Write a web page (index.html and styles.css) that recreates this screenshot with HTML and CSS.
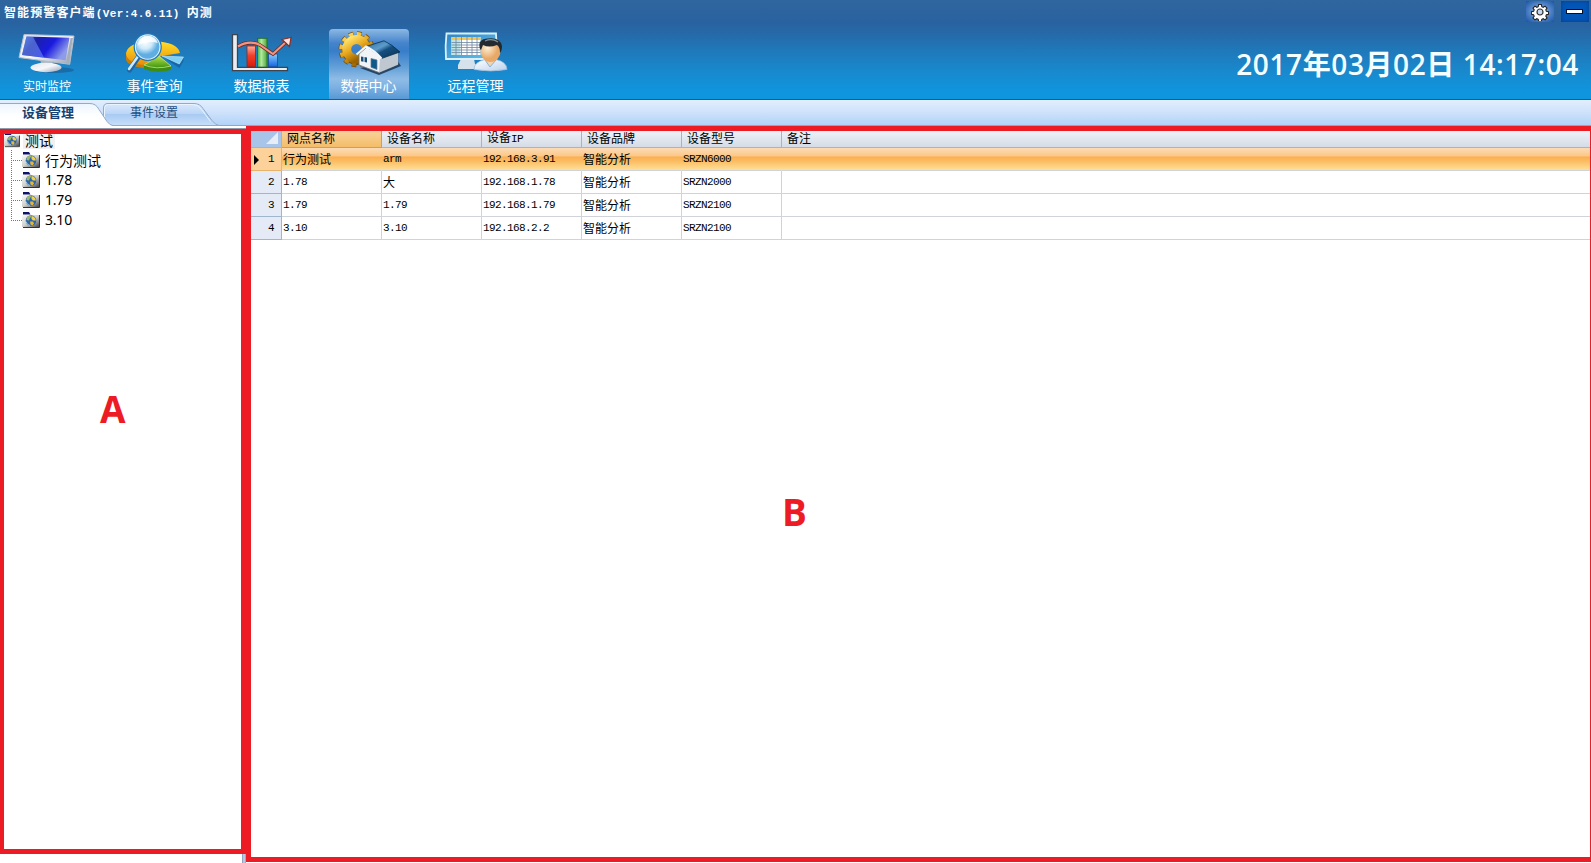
FILE: index.html
```html
<!DOCTYPE html>
<html lang="zh-CN">
<head>
<meta charset="utf-8">
<title>智能预警客户端</title>
<link rel="stylesheet" href="styles.css">
</head>
<body>
<div class="app">
  <header class="header">
    <div class="titlebar">
      <div class="title">智能预警客户端<span class="title-latin">(Ver:4.6.11) </span>内测</div>
      <div class="window-buttons">
        <button class="win-btn settings" aria-label="设置">
          <svg width="18" height="18" viewBox="-9 -9 18 18"><path d="M-1.300-7.500h2.600l.5 2.200 1.400.6 1.900-1.200 1.900 1.900-1.200 1.900.6 1.400 2.200.5v2.400l-2.200.5-.6 1.400 1.200 1.900-1.900 1.900-1.900-1.200-1.400.6-.5 2.200h-2.600l-.5-2.200-1.400-.6-1.900 1.200-1.900-1.900 1.200-1.900-.6-1.400-2.200-.5v-2.400l2.200-.5.6-1.400L-7-4l1.900-1.900 1.900 1.200 1.400-.6z" fill="#fff" stroke="#222" stroke-width="1.100"/><circle r="3" fill="#c8d8ee" stroke="#333" stroke-width="1.200"/></svg>
        </button>
        <button class="win-btn minimize" aria-label="最小化"><span class="min-bar"></span></button>
      </div>
    </div>
    <nav class="toolbar">
      <a class="tool small">
        <svg class="tool-icon" viewBox="0 0 80 50">
          <defs>
            <linearGradient id="scr" x1="0" x2="1" y2=".4"><stop offset="0" stop-color="#3d62dc"/><stop offset=".3" stop-color="#1a22a4"/><stop offset=".65" stop-color="#1a1adf"/><stop offset="1" stop-color="#8d9bea"/></linearGradient>
            <linearGradient id="metal" x2="1" y2="1"><stop offset="0" stop-color="#dfe5ee"/><stop offset=".5" stop-color="#f6f7fa"/><stop offset="1" stop-color="#929eb0"/></linearGradient>
          </defs>
          <ellipse cx="46" cy="41" rx="20" ry="3" fill="#174f83" opacity=".5"/>
          <path d="M32 30h13l-1 9H34z" fill="#a9b4c2"/>
          <ellipse cx="38" cy="38.500" rx="15.500" ry="4.700" fill="url(#metal)"/>
          <path d="M16 5.500 66 7 61.700 35.300 11 28.500z" fill="url(#metal)" stroke="#b4becb" stroke-width="1"/>
          <path d="M18.500 7.500 61.500 8.800 57.500 31.200 14 26z" fill="url(#scr)"/>
          <path d="M18.500 7.500 25 7.700 36 28.600 14 26z" fill="#7aa4f5" opacity=".5"/>
          <path d="M62.500 9 65 9 61 33 58.500 32z" fill="#a4adba"/>
        </svg>
        <span class="tool-label">实时监控</span>
      </a>
      <a class="tool">
        <svg class="tool-icon" viewBox="0 0 80 50">
          <defs>
            <radialGradient id="lens" cx=".4" cy=".3"><stop offset="0" stop-color="#fff"/><stop offset=".55" stop-color="#cfeafa"/><stop offset="1" stop-color="#5faee3"/></radialGradient>
            <linearGradient id="gold" y2="1" x2="0"><stop offset="0" stop-color="#ffe02a"/><stop offset="1" stop-color="#e98d08"/></linearGradient>
            <linearGradient id="leaf" y2="1" x2="0"><stop offset="0" stop-color="#b8e34c"/><stop offset="1" stop-color="#3f9410"/></linearGradient>
          </defs>
          <path d="M11 24v7q2 6 17 8L46 27 65 24z" fill="#c77c08"/>
          <path d="M46 27 28 36Q11 33 11 24 13 13 38 12 63 13 65 24z" fill="url(#gold)"/>
          <path d="M44 27 29 36v4q12 5 27 1v-4z" fill="#3d8c13"/>
          <path d="M44 27 29 36q12 5 27 1z" fill="url(#leaf)" stroke="#d4ee90" stroke-width=".7"/>
          <path d="M47 27 68.500 28v4l-4 7L59 35.500z" fill="#1767a8"/>
          <path d="M47 27 68.500 28 64.300 35z" fill="#7bd0f3" stroke="#c9efff" stroke-width=".6"/>
          <path d="M23 28.500 14.500 41" stroke="#2064a3" stroke-width="5" stroke-linecap="round"/>
          <path d="M22.500 28 14 40" stroke="#c8eafc" stroke-width="2.600" stroke-linecap="round"/>
          <circle cx="32.700" cy="18" r="12.800" fill="url(#lens)" stroke="#2378b7" stroke-width="2.600"/>
          <circle cx="32.700" cy="18" r="12.200" fill="none" stroke="#d8f0ff" stroke-width="1.300"/>
          <path d="M23 16q2-9 10-9 7 0 10 7-9-3-20 2z" fill="#fff" opacity=".8"/>
        </svg>
        <span class="tool-label">事件查询</span>
      </a>
      <a class="tool">
        <svg class="tool-icon" viewBox="0 0 80 50">
          <defs>
            <linearGradient id="red" x2="0" y2="1"><stop offset="0" stop-color="#ffaca0"/><stop offset=".45" stop-color="#f0402a"/><stop offset="1" stop-color="#d81b08"/></linearGradient>
            <linearGradient id="blue" x2="0" y2="1"><stop offset="0" stop-color="#8cccfa"/><stop offset="1" stop-color="#0e62e4"/></linearGradient>
            <linearGradient id="green" x2="1"><stop offset="0" stop-color="#47ad3b"/><stop offset=".4" stop-color="#b4eaa0"/><stop offset="1" stop-color="#4ca83c"/></linearGradient>
          </defs>
          <rect x="25" y="17" width="8.500" height="21" fill="url(#red)" stroke="#8f2618" stroke-width=".8"/>
          <rect x="35.500" y="9.300" width="9.500" height="29" fill="url(#green)" stroke="#1f6b28" stroke-width=".8"/>
          <rect x="46.500" y="25" width="9" height="13" fill="url(#blue)" stroke="#1b4b9a" stroke-width=".8"/>
          <path d="M10.500 5.700h5v32.600h50v3.400h-55z" fill="#e9edf1" stroke="#3c4450" stroke-width="1.300"/>
          <path d="M16 17.500Q27 10.500 38 16L51 25 65 12" fill="none" stroke="#702a23" stroke-width="3.600"/>
          <path d="M16 17.500Q27 10.500 38 16L51 25 65 12" fill="none" stroke="#f39482" stroke-width="2.100"/>
          <path d="M60 10.500 69 8.500 67.500 17.500z" fill="#ffe4de" stroke="#8a2d26" stroke-width="1.200"/>
        </svg>
        <span class="tool-label">数据报表</span>
      </a>
      <a class="tool active">
        <svg class="tool-icon" viewBox="0 0 80 50">
          <defs>
            <linearGradient id="cog" x2=".6" y2="1"><stop offset="0" stop-color="#ffe36c"/><stop offset=".5" stop-color="#e7a81e"/><stop offset="1" stop-color="#9b6200"/></linearGradient>
            <linearGradient id="roof" x2="1" y2="1"><stop offset="0" stop-color="#2f6796"/><stop offset=".4" stop-color="#5c9ccb"/><stop offset=".55" stop-color="#154f80"/><stop offset="1" stop-color="#06304f"/></linearGradient>
          </defs>
          <circle cx="28" cy="21" r="11" fill="none" stroke="#6e4a08" stroke-width="8"/>
          <circle cx="27.500" cy="20.300" r="15.500" fill="none" stroke="#79500b" stroke-width="5" stroke-dasharray="4.500 3.617"/>
          <circle cx="27.500" cy="20.300" r="15.200" fill="none" stroke="url(#cog)" stroke-width="4" stroke-dasharray="4.200 3.760"/>
          <circle cx="27.500" cy="20.300" r="9.800" fill="none" stroke="url(#cog)" stroke-width="9"/>
          <path d="M31 39 50 46 72 37 68 31z" fill="#10263c" opacity=".75"/>
          <path d="M30 25 38 18 52 28 69 23V35.500L50 43.500 30 36z" fill="#f1f3f6" stroke="#697988" stroke-width=".8"/>
          <path d="M51 29 69 24V35.500L50 43.500z" fill="#bfc8d1"/>
          <path d="M37 17.500 55 11.800Q63 15.500 71 23L53 29.300Q45 22 37 17.500z" fill="url(#roof)" stroke="#092f4e" stroke-width=".8"/>
          <path d="M27.500 25.500 37 17.500Q46 22 52.500 29.500" fill="none" stroke="#f4f7fa" stroke-width="2"/>
          <path d="M32 27.500 38 28.500V33.500L32 32.300z" fill="#174e78"/>
          <path d="M35 27.500v6" stroke="#fff"/>
          <path d="M42 29.500 48 31V40.500L42 38.300z" fill="#0c5a8c" stroke="#617d92" stroke-width=".7"/>
        </svg>
        <span class="tool-label">数据中心</span>
      </a>
      <a class="tool">
        <svg class="tool-icon" viewBox="0 0 80 50">
          <defs>
            <linearGradient id="mon" x2="1" y2="1"><stop offset="0" stop-color="#2b85c6"/><stop offset="1" stop-color="#64c3ee"/></linearGradient>
            <radialGradient id="face" cx=".35" cy=".35"><stop offset="0" stop-color="#fff0d8"/><stop offset="1" stop-color="#e8a968"/></radialGradient>
            <linearGradient id="coat" x2="1" y2="1"><stop offset="0" stop-color="#fff"/><stop offset="1" stop-color="#b9d1ec"/></linearGradient>
          </defs>
          <path d="M25 30h13l1 5 6 2v3H22v-4z" fill="#d5e1eb"/>
          <path d="M10.500 4.500H60L61 27 57 30H10q-1-13 .5-25.500z" fill="url(#mon)" stroke="#d9effa" stroke-width="1.800"/>
          <path d="M15.500 8h29v18h-29z" fill="#fff"/>
          <path d="M15.500 8h29v3h-29z" fill="#f6c655"/>
          <path d="M15.500 11h9v15h-9z" fill="#bce5e7"/>
          <path d="M15.500 13.500h29M15.500 16h29M15.500 18.500h29M15.500 21h29M15.500 23.500h29M20 8v18M25.500 8v18M31 8v18M36 8v18M41 8v18" stroke="#6f879e" stroke-width=".8"/>
          <path d="M38 40.500Q38 33 49 30.500H60Q71 33 71 40.500 55 43.500 38 40.500z" fill="url(#coat)" stroke="#9ab8d9" stroke-width=".7"/>
          <path d="M49 31 54 38 60 31" fill="#f2d3ae" stroke="#8db1d6"/>
          <ellipse cx="54.500" cy="22" rx="10" ry="11" fill="url(#face)"/>
          <path d="M44 20Q41 10 52 9.500 64 8 66 17 66 22 64 24 64 18 61 16 53 19 47 16L45 21z" fill="#252a30"/>
          <path d="M49 12q7-3 13 1" fill="none" stroke="#87919b" stroke-width="1.200"/>
        </svg>
        <span class="tool-label">远程管理</span>
      </a>
      <div class="clock">2017年03月02日 14:17:04</div>
    </nav>
  </header>

  <div class="tabs">
    <svg class="tab-shapes" width="230" height="29" viewBox="0 0 230 29">
      <defs>
        <linearGradient id="on" x2="0" y2="1"><stop offset="0" stop-color="#edf5fe"/><stop offset=".5" stop-color="#fff"/></linearGradient>
        <linearGradient id="off" x2="0" y2="1"><stop offset="0" stop-color="#d9e9fd"/><stop offset=".45" stop-color="#bdd6f6"/><stop offset=".5" stop-color="#a9caf2"/><stop offset="1" stop-color="#c7dffb"/></linearGradient>
      </defs>
      <path d="M103.500 25.500V8q0-4.500 4.500-4.500h86q6 0 9 5l9 12q4 5 7 5z" fill="url(#off)" stroke="#91abca"/>
      <path d="M104.500 22V8q0-3.500 4-3.500h85q5 0 8 5l9 12" fill="none" stroke="#eaf4ff"/>
      <path d="M0 3.500h90q6 0 9 6l8 12q3 4 6 4V29H0z" fill="url(#on)"/>
      <path d="M0 3.500h90q6 0 9 6l8 12q3 4 6 4" fill="none" stroke="#91abca"/>
      <path d="M0 28.500h113" stroke="#8f9bab"/>
    </svg>
    <span class="tab selected">设备管理</span>
    <span class="tab">事件设置</span>
  </div>

  <svg class="symbols" width="0" height="0">
    <defs>
      <linearGradient id="fold" x2="1" y2="1"><stop offset="0" stop-color="#fafafa"/><stop offset=".5" stop-color="#cfcfcb"/><stop offset="1" stop-color="#444"/></linearGradient>
      <symbol id="node" viewBox="0 0 18 16">
        <path d="M0 3h17.500v12H0z" fill="url(#fold)"/>
        <path d="M17.500 3v12.500H1" fill="none" stroke="#333"/>
        <path d="M1 0h6l1.500 2.500H1z" fill="#10136b"/>
        <circle cx="9" cy="8.500" r="5.300" fill="#2d65ab"/>
        <path d="M4.500 8q-.5-4 4-4.500 1.500 1-.5 2.500L7 8.500z" fill="#9fb76c"/>
        <path d="M9.500 4q4 .5 4.300 4.500L11 8.500 9.500 7z" fill="#f1d348"/>
        <path d="M8 9.500 11 9.500 12 11.500 10.500 13.500 8.500 12.500z" fill="#e4b83a"/>
        <path d="M4 9.500q1 3.500 4 4" fill="none" stroke="#9cc6e9"/>
      </symbol>
    </defs>
  </svg>

  <main class="body">
    <aside class="tree">
      <div class="node root"><svg class="node-icon"><use href="#node"/></svg><span class="node-text">测试</span></div>
      <div class="children">
        <div class="node"><svg class="node-icon"><use href="#node"/></svg><span class="node-text">行为测试</span></div>
        <div class="node"><svg class="node-icon"><use href="#node"/></svg><span class="node-text number">1.78</span></div>
        <div class="node"><svg class="node-icon"><use href="#node"/></svg><span class="node-text number">1.79</span></div>
        <div class="node"><svg class="node-icon"><use href="#node"/></svg><span class="node-text number">3.10</span></div>
      </div>
    </aside>
    <div class="splitter"></div>
    <section class="grid">
      <div class="row head">
        <div class="cell index"><svg width="12" height="12"><path d="M12 0v12H0z" fill="#e6edf6"/></svg></div>
        <div class="cell sorted">网点名称</div><div class="cell">设备名称</div><div class="cell"><span>设备<span class="mono">IP</span></span></div><div class="cell">设备品牌</div><div class="cell">设备型号</div><div class="cell last">备注</div>
      </div>
      <div class="row current">
        <div class="cell index mono"><svg class="pointer" width="5" height="10"><path d="M0 0 5 5 0 10z"/></svg>1</div>
        <div class="cell">行为测试</div><div class="cell mono">arm</div><div class="cell mono">192.168.3.91</div><div class="cell">智能分析</div><div class="cell mono">SRZN6000</div><div class="cell last"></div>
      </div>
      <div class="row">
        <div class="cell index mono">2</div>
        <div class="cell mono">1.78</div><div class="cell">大</div><div class="cell mono">192.168.1.78</div><div class="cell">智能分析</div><div class="cell mono">SRZN2000</div><div class="cell last"></div>
      </div>
      <div class="row">
        <div class="cell index mono">3</div>
        <div class="cell mono">1.79</div><div class="cell mono">1.79</div><div class="cell mono">192.168.1.79</div><div class="cell">智能分析</div><div class="cell mono">SRZN2100</div><div class="cell last"></div>
      </div>
      <div class="row">
        <div class="cell index mono">4</div>
        <div class="cell mono">3.10</div><div class="cell mono">3.10</div><div class="cell mono">192.168.2.2</div><div class="cell">智能分析</div><div class="cell mono">SRZN2100</div><div class="cell last"></div>
      </div>
    </section>
  </main>

  <div class="region region-a"><span class="mark mark-a">A</span></div>
  <div class="region region-b"><span class="mark mark-b">B</span></div>
</div>
</body>
</html>
```
FILE: styles.css
```css
* { box-sizing: border-box; }

body {
  margin: 0;
  overflow: hidden;
  background: #fff;
  color: #000;
  font: 12px/1 "Noto Sans CJK SC", sans-serif;
}

.app {
  position: relative;
  display: flex;
  flex-direction: column;
  width: 1591px;
  height: 863px;
  overflow: hidden;
}

.mono {
  font-family: "Liberation Mono", "Noto Sans CJK SC", monospace;
  font-size: 11px;
  letter-spacing: -0.6px;
}

/* Header */
.header {
  height: 100px;
  background: linear-gradient(#30669f 0, #2962a0 23px, #2669a8 33px, #1f78b9 50px, #198acf 73px, #0f94dd 90px, #0e96dd 99px);
  border-bottom: 1px solid #135e9e;
}

.titlebar {
  display: flex;
  justify-content: space-between;
  height: 29px;
}

.title {
  padding: 5px 0 0 4px;
  color: #fff;
  font-weight: 700;
  line-height: 13px;
  letter-spacing: 1.1px;
  white-space: pre;
}

.title-latin {
  font: 700 11px/13px "Liberation Mono", monospace;
  letter-spacing: 0.4px;
}

.window-buttons {
  display: flex;
  gap: 7px;
  padding: 1px 2px 0 0;
}

.win-btn {
  display: flex;
  align-items: center;
  justify-content: center;
  width: 28px;
  height: 21px;
  padding: 0;
  border: 0;
}

.settings { background: radial-gradient(#9fc0ea 10%, #5687c9 50%, #1d58a9 95%); }
.minimize { background: #0356b8; box-shadow: inset 0 0 4px #063e85; }

.min-bar {
  width: 17px;
  height: 5px;
  margin-right: 1px;
  border: 1px solid #05111f;
  background: #fff;
}

.toolbar {
  display: flex;
  gap: 27px;
  height: 70px;
  padding-left: 8px;
}

.tool {
  display: flex;
  flex-direction: column;
  align-items: center;
  width: 80px;
  height: 70px;
  color: #fff;
}

.tool.active {
  border-radius: 4px 4px 0 0;
  background: linear-gradient(#8db8e3 0, #4484cc 14px, #377dc9 22px, #69a4da 40px, #8fbce6 50px, #7db1e2 58px, #5799d5 70px);
}

.tool-icon { width: 80px; height: 50px; }

.tool-label {
  margin: -1px 1px 0 0;
  font-size: 14px;
  line-height: 14px;
}

.small .tool-label { margin: 0 2px 0 0; font-size: 12px; }

.clock {
  margin-left: auto;
  padding: 15px 12px 0 0;
  color: #f4ffff;
  font: 600 28px/40px "Open Sans", "Noto Sans CJK SC", sans-serif;
  letter-spacing: 0.6px;
  white-space: nowrap;
}

/* Tabs */
.tabs {
  position: relative;
  display: flex;
  height: 29px;
  background: linear-gradient(#e2eefd 0, #cfe2fb 12px, #b2d3f8 25px, #8aa8cb 25px, #8aa8cb 26px, #fff 26px, #fff 28px, #8f9bab 28px);
}

.tab-shapes { position: absolute; inset: 0 auto auto 0; }

.tab {
  position: relative;
  width: 107px;
  padding: 5px 0 0 23px;
  color: #24507f;
  line-height: 13px;
}

.tab.selected {
  padding-left: 22px;
  color: #174170;
  font-size: 13px;
  font-weight: 700;
}

/* Body */
.body {
  display: flex;
  flex: 1;
  min-height: 0;
}

.tree {
  width: 242px;
  padding: 1px 0 0 4px;
  font: 14px/20px "Noto Sans CJK SC", sans-serif;
}

.node {
  display: flex;
  align-items: center;
  gap: 5px;
  height: 20px;
}

.root { gap: 3px; }
.root .node-icon { width: 16px; }
.root .node-text { padding: 0 2px; line-height: 17px; background: #f0f0f0; }
.node-icon { width: 18px; height: 16px; }
.node-text { line-height: 18px; padding-bottom: 1px; }
.number { font-family: "Noto Sans", sans-serif; letter-spacing: -0.2px; }

.children {
  margin-left: 7px;
  background: repeating-linear-gradient(#777 0 1px, transparent 1px 2px) 0 0 / 1px 70px no-repeat;
}

.children .node {
  padding-left: 11px;
  background: repeating-linear-gradient(90deg, #777 0 1px, transparent 1px 2px) 0 10px / 11px 1px no-repeat;
}

.splitter {
  width: 4px;
  background: linear-gradient(90deg, #7f93b3, #c9d8ee, #8e9cb4);
}

.grid {
  flex: 1;
  padding: 2px 0 0 5px;
}

.row {
  display: grid;
  grid-template-columns: 31px repeat(5, 100px) 1fr;
  height: 23px;
}

.cell {
  display: flex;
  align-items: center;
  padding-left: 1px;
  border-right: 1px solid #d0d4da;
  border-bottom: 1px solid #d0d4da;
  white-space: nowrap;
}

.cell.mono { padding-top: 1px; }
.cell.last { border-right: 0; }

.index {
  justify-content: flex-end;
  padding-right: 7px;
  border-color: #9eb6ce;
  background: #e4ebf6;
}

.head { height: 17px; }

.head .cell {
  padding: 0 0 2px 5px;
  border-color: #9eb6ce;
  background: linear-gradient(#eef1f7, #d6dce7);
}

.head .index {
  padding: 0 3px 3px 0;
  align-items: flex-end;
  background: #a9c4e9;
}

.head .sorted {
  border-color: #e39a3d;
  background: linear-gradient(#f9d29a, #f4bd68);
}

.current { background: linear-gradient(#fbdcb6 0, #fbc887 8px, #fbae50 9px, #fcc067 14px, #fee09a 22px); }
.current .cell { border-right-color: transparent; }
.current .index { border-color: #e8b36b; background: #fdd29a; }
.pointer { margin-right: 9px; }

/* Annotated regions */
.region {
  position: absolute;
  border: 5px solid #ed1c24;
}

.region-a {
  top: 129px;
  left: 0;
  width: 246px;
  height: 725px;
  border-left-width: 4px;
}

.region-b {
  top: 126px;
  left: 246px;
  width: 1345px;
  height: 736px;
  border-right-width: 1px;
}

.mark {
  position: absolute;
  color: #ed1c24;
  font: 700 37px/40px "Open Sans", sans-serif;
}

.mark-a { left: 96px; top: 255px; }
.mark-b { left: 531px; top: 361px; }
```
